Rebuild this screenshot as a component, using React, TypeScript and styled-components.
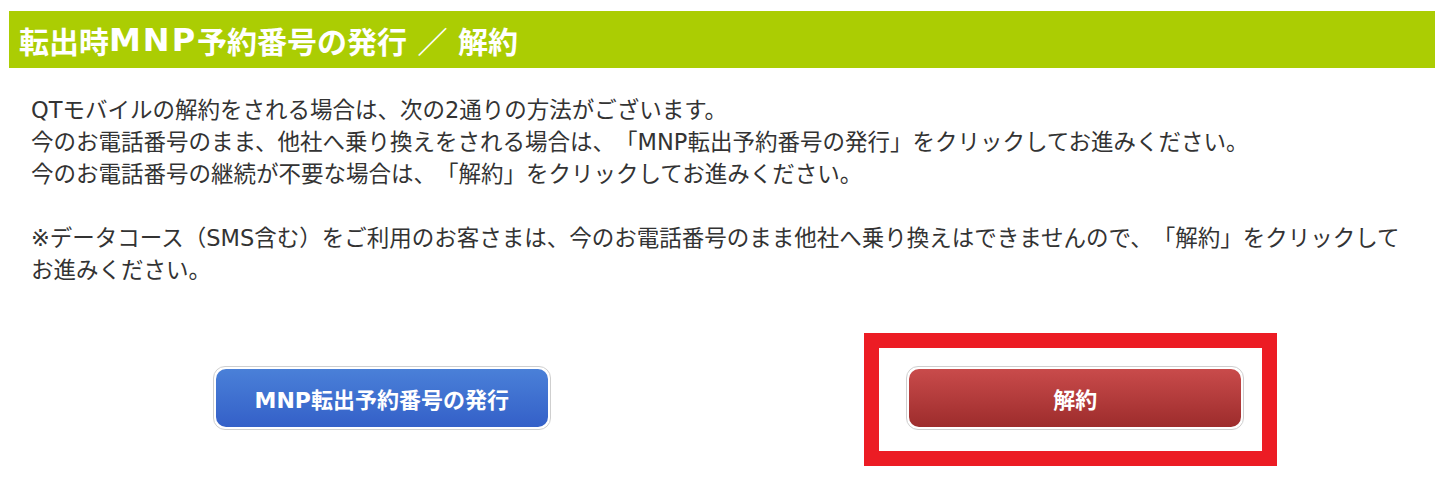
import React from "react";
import styled, { createGlobalStyle, css } from "styled-components";

const GlobalStyle = createGlobalStyle`
  html, body { margin: 0; padding: 0; background: #ffffff; }
  body {
    font-family: "DejaVu Sans", "Noto Sans CJK JP", sans-serif;
    color: #333333;
    text-spacing-trim: space-all;
  }
`;

const Page = styled.div`
  padding: 11px 15px 60px 9px;
`;

const Title = styled.h2`
  margin: 0;
  height: 57px;
  display: flex;
  align-items: center;
  padding-left: 10px;
  background: #abcd03;
  color: #ffffff;
  font-family: "DejaVu Sans", "Noto Sans CJK JP", sans-serif;
  font-size: 30px;
  font-weight: 700;
  white-space: pre;
`;

const Latin = styled.span<{ $spacing?: number; $size?: number; $drop?: number }>`
  font-family: "DejaVu Sans", sans-serif;
  letter-spacing: ${(p) => p.$spacing ?? 0}px;
  vertical-align: ${(p) => -(p.$drop ?? 0)}px;
  ${(p) => p.$size && css`font-size: ${p.$size}px;`}
`;

const Body = styled.div`
  padding: 26px 14px 0 22px;
`;

const Para = styled.p`
  margin: 0 0 32px;
  font-size: 22.5px;
  line-height: 32px;
  white-space: nowrap;
`;

const ButtonRow = styled.div`
  display: grid;
  grid-template-columns: 1fr 1fr;
  margin-top: 80px;
  padding: 0 13px 0 26px;
`;

const Cell = styled.div`
  display: flex;
  justify-content: center;
`;

const Frame = styled.div<{ $marked?: boolean }>`
  position: relative;
  ${(p) =>
    p.$marked &&
    css`
      &::after {
        content: "";
        position: absolute;
        left: -42px;
        right: -33px;
        top: -33px;
        bottom: -36px;
        border: 15px solid #ec1c24;
        pointer-events: none;
      }
    `}
`;

const Button = styled.button`
  width: 338px;
  height: 64px;
  padding: 2px;
  border: 1px solid #cfcfcf;
  border-radius: 12px;
  background: #ffffff;
  cursor: pointer;
  display: block;
`;

const Face = styled.span<{ $tone: "blue" | "red" }>`
  display: flex;
  align-items: center;
  justify-content: center;
  height: 100%;
  border-radius: 10px;
  color: #ffffff;
  font-family: "DejaVu Sans", "Noto Sans CJK JP", sans-serif;
  font-weight: 700;
  font-size: 22px;
  background: ${(p) =>
    p.$tone === "blue"
      ? "linear-gradient(#4a80d8, #3460c8)"
      : "linear-gradient(#c94b4b, #9d2c2c)"};
`;

export default function App() {
  return (
    <>
      <GlobalStyle />
      <Page>
        <Title>
          転出時<Latin $size={32} $spacing={2} $drop={2}>MNP</Latin>予約番号の発行 ／ 解約
        </Title>
        <Body>
          <Para>
            QTモバイルの解約をされる場合は、次の2通りの方法がございます。
            <br />
            今のお電話番号のまま、他社へ乗り換えをされる場合は、「MNP転出予約番号の発行」をクリックしてお進みください。
            <br />
            今のお電話番号の継続が不要な場合は、「解約」をクリックしてお進みください。
          </Para>
          <Para>
            ※データコース（SMS含む）をご利用のお客さまは、今のお電話番号のまま他社へ乗り換えはできませんので、「解約」をクリックして
            <br />
            お進みください。
          </Para>
        </Body>
        <ButtonRow>
          <Cell>
            <Frame>
              <Button>
                <Face $tone="blue">MNP転出予約番号の発行</Face>
              </Button>
            </Frame>
          </Cell>
          <Cell>
            <Frame $marked>
              <Button>
                <Face $tone="red">解約</Face>
              </Button>
            </Frame>
          </Cell>
        </ButtonRow>
      </Page>
    </>
  );
}
